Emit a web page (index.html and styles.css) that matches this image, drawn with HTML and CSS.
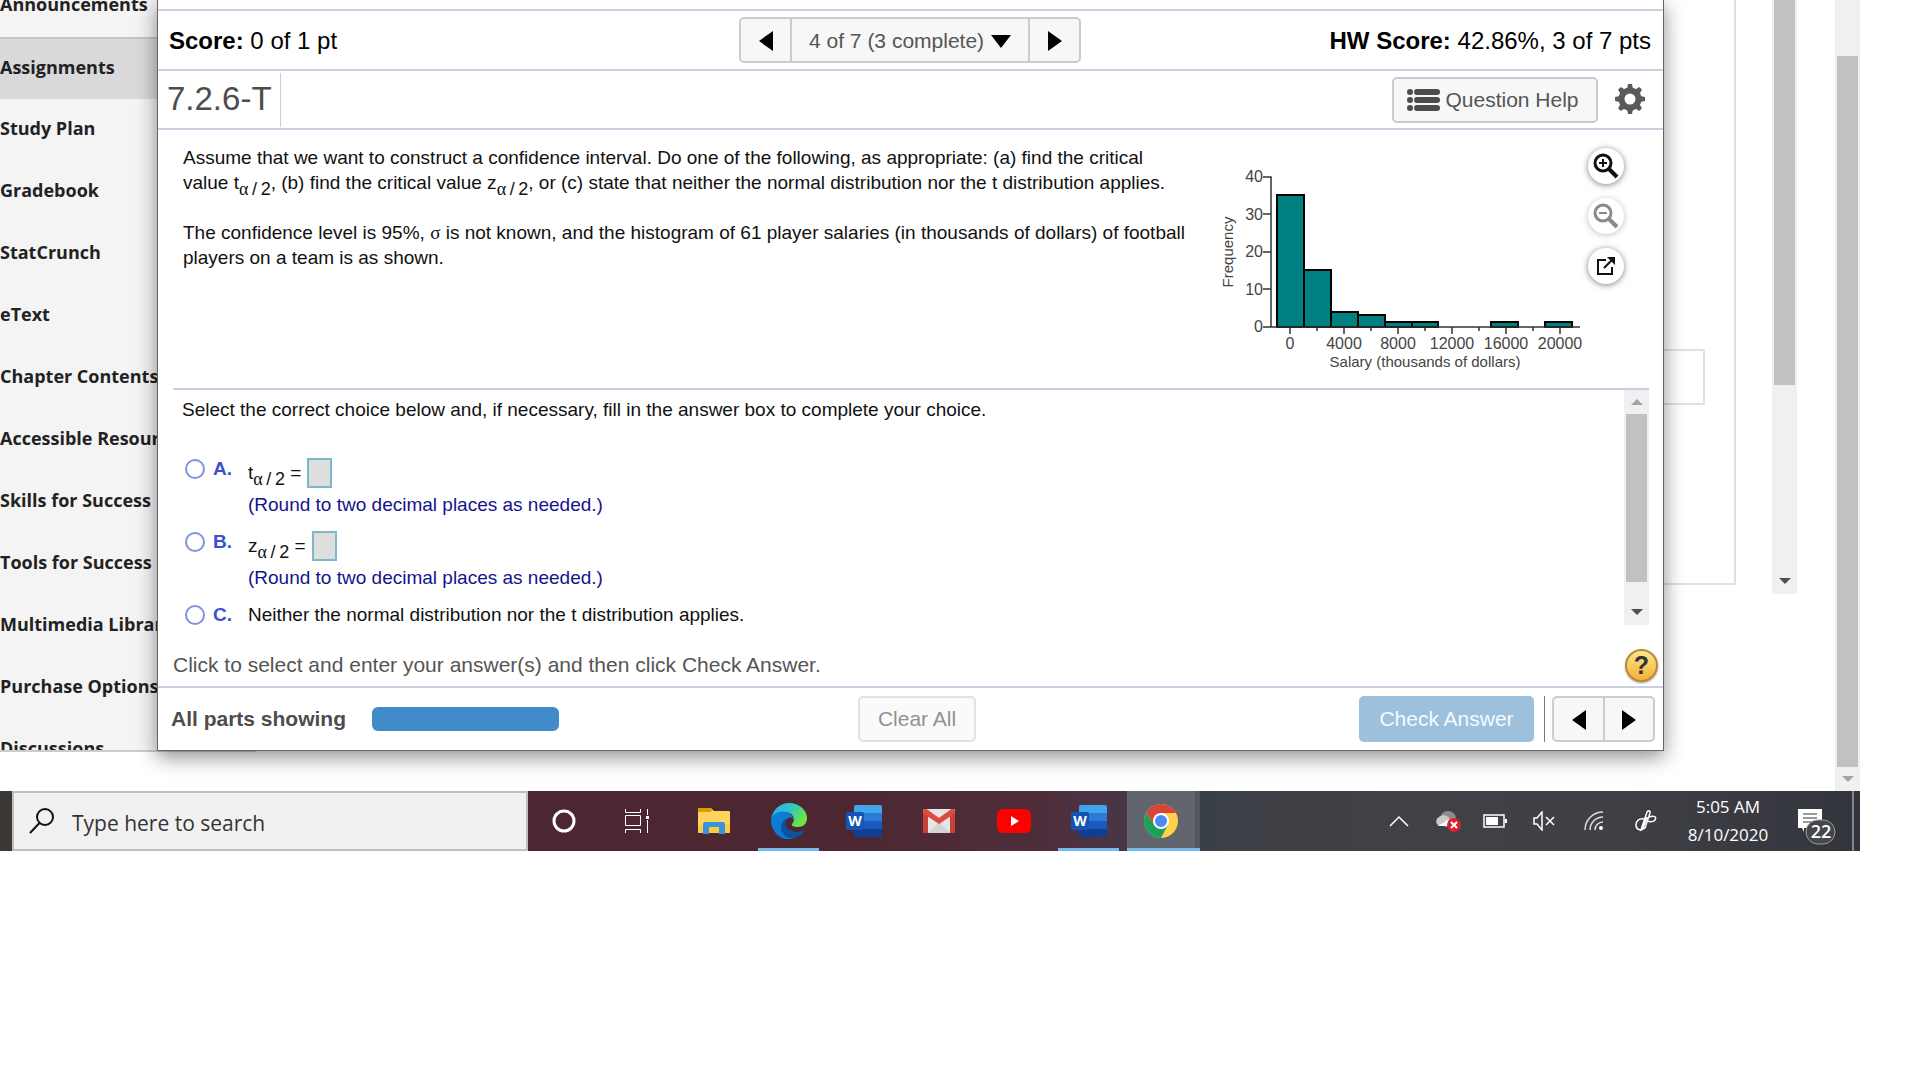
FILE: index.html
```html
<!DOCTYPE html>
<html lang="en">
<head>
    <meta charset="utf-8">
    <title>Homework - 7.2.6-T</title>
    <link rel="stylesheet" href="styles.css">
</head>
<body>
    <div class="screen">
        <div class="browser">
            <nav class="sidebar">
                <ul>
                    <li><a href="#">Announcements</a></li>
                    <li class="active"><a href="#">Assignments</a></li>
                    <li><a href="#">Study Plan</a></li>
                    <li><a href="#">Gradebook</a></li>
                    <li><a href="#">StatCrunch</a></li>
                    <li><a href="#">eText</a></li>
                    <li><a href="#">Chapter Contents</a></li>
                    <li><a href="#">Accessible Resources</a></li>
                    <li><a href="#">Skills for Success</a></li>
                    <li><a href="#">Tools for Success</a></li>
                    <li><a href="#">Multimedia Library</a></li>
                    <li><a href="#">Purchase Options</a></li>
                    <li><a href="#">Discussions</a></li>
                </ul>
            </nav>

            <div class="page-body">
                <div class="page-panel">
                    <div class="page-box"></div>
                </div>
            </div>

            <div class="scrollbar inner-scroll">
                <div class="thumb"></div>
                <span class="arrow down"></span>
            </div>
            <div class="scrollbar outer-scroll">
                <div class="thumb"></div>
                <span class="arrow down light"></span>
            </div>

            <!-- homework player -->
            <section class="dialog">
                <header class="score-row">
                    <p><b>Score:</b> 0 of 1 pt</p>
                    <div class="btn-group">
                        <button type="button" aria-label="Previous question"><span class="tri left"></span></button>
                        <div class="picker">
                            <select aria-label="Question">
                                <option>4 of 7 (3 complete)</option>
                            </select>
                            <span class="tri bottom"></span>
                        </div>
                        <button type="button" aria-label="Next question"><span class="tri right"></span></button>
                    </div>
                    <p class="hw-score"><b>HW Score:</b> 42.86%, 3 of 7 pts</p>
                </header>

                <div class="title-row">
                    <h1>7.2.6-T</h1>
                    <button type="button" class="btn help-btn">
                        <svg width="34" height="22" viewBox="0 0 34 22" fill="#4d4d4d">
                            <circle cx="3" cy="3" r="3"/><circle cx="3" cy="11" r="3"/><circle cx="3" cy="19" r="3"/>
                            <rect x="7" y="0" width="26" height="6" rx="3"/>
                            <rect x="7" y="8" width="26" height="6" rx="3"/>
                            <rect x="7" y="16" width="26" height="6" rx="3"/>
                        </svg>
                        Question Help
                    </button>
                    <button type="button" class="gear" aria-label="Settings">
                        <svg width="30" height="30" viewBox="-15 -15 30 30">
                            <g fill="#5a5a5a">
                                <path id="tooth" d="M-3.2-9 L-2-15 H2 L3.2-9z"/>
                                <use href="#tooth" transform="rotate(45)"/>
                                <use href="#tooth" transform="rotate(90)"/>
                                <use href="#tooth" transform="rotate(135)"/>
                                <use href="#tooth" transform="rotate(180)"/>
                                <use href="#tooth" transform="rotate(225)"/>
                                <use href="#tooth" transform="rotate(270)"/>
                                <use href="#tooth" transform="rotate(315)"/>
                            </g>
                            <circle r="8.5" fill="none" stroke="#5a5a5a" stroke-width="6"/>
                        </svg>
                    </button>
                </div>

                <div class="question">
                    <div class="question-text">
                        <p>Assume that we want to construct a confidence interval. Do one of the following, as appropriate: (a) find the critical<br>
                        value t<sub><i>α</i>&thinsp;/&thinsp;2</sub>, (b) find the critical value z<sub><i>α</i>&thinsp;/&thinsp;2</sub>, or (c) state that neither the normal distribution nor the t distribution applies.</p>
                        <p>The confidence level is 95%, <span class="sigma">σ</span> is not known, and the histogram of 61 player salaries (in thousands of dollars) of football<br>
                        players on a team is as shown.</p>
                    </div>
                    <svg class="histogram" width="370" height="228" viewBox="1214 147 370 228">
                        <g fill="#008080" stroke="#000" stroke-width="2">
                            <rect x="1277" y="195" width="27" height="132"/>
                            <rect x="1304" y="270" width="27" height="57"/>
                            <rect x="1331" y="312" width="27" height="15"/>
                            <rect x="1358" y="315" width="27" height="12"/>
                            <rect x="1385" y="322" width="27" height="5"/>
                            <rect x="1412" y="322" width="26" height="5"/>
                            <rect x="1491" y="322" width="27" height="5"/>
                            <rect x="1545" y="322" width="27" height="5"/>
                        </g>
                        <path d="M1263 177H1271V327M1263 214H1271M1263 252H1271M1263 289H1271M1263 327H1580M1290 327v7M1317 327v4M1344 327v7M1371 327v4M1398 327v7M1425 327v4M1452 327v7M1479 327v4M1506 327v7M1533 327v4M1560 327v7" fill="none" stroke="#333" stroke-width="1.5"/>
                        <g class="tick-y">
                            <text x="1263" y="182">40</text>
                            <text x="1263" y="220">30</text>
                            <text x="1263" y="257">20</text>
                            <text x="1263" y="295">10</text>
                            <text x="1263" y="332">0</text>
                        </g>
                        <g class="tick-x">
                            <text x="1290" y="349">0</text>
                            <text x="1344" y="349">4000</text>
                            <text x="1398" y="349">8000</text>
                            <text x="1452" y="349">12000</text>
                            <text x="1506" y="349">16000</text>
                            <text x="1560" y="349">20000</text>
                        </g>
                        <g class="axis-name">
                            <text x="1425" y="367">Salary (thousands of dollars)</text>
                            <text transform="translate(1233 252) rotate(-90)">Frequency</text>
                        </g>
                    </svg>
                    <div class="tools">
                        <button type="button" aria-label="Zoom in">
                            <svg width="26" height="26" viewBox="0 0 26 26" fill="none" stroke="#111">
                                <circle cx="10" cy="10" r="8" stroke-width="3"/>
                                <path d="M15.500 15.500L24 24" stroke-width="4"/>
                                <path d="M6 10h8M10 6v8" stroke-width="2"/>
                            </svg>
                        </button>
                        <button type="button" aria-label="Zoom out" class="off">
                            <svg width="26" height="26" viewBox="0 0 26 26" fill="none" stroke="#8a8a8a">
                                <circle cx="10" cy="10" r="8" stroke-width="3"/>
                                <path d="M15.500 15.500L24 24" stroke-width="4"/>
                                <path d="M6 10h8" stroke-width="2"/>
                            </svg>
                        </button>
                        <button type="button" aria-label="Open in new window">
                            <svg width="20" height="20" viewBox="0 0 20 20" fill="none" stroke="#111" stroke-width="2">
                                <path d="M10 4H2v14h14V11M8 12L16 4"/>
                                <path d="M11 1h8v8z" fill="#111" stroke="none"/>
                            </svg>
                        </button>
                    </div>
                </div>

                <div class="answers">
                    <form class="choices">
                        <p>Select the correct choice below and, if necessary, fill in the answer box to complete your choice.</p>
                        <div class="choice">
                            <input type="radio" name="choice" id="choiceA">
                            <label for="choiceA">A.</label>
                            <div>
                                <div class="expr"><label for="boxA">t<sub><i>α</i>&thinsp;/&thinsp;2</sub> =</label><input type="text" id="boxA"></div>
                                <div class="note">(Round to two decimal places as needed.)</div>
                            </div>
                        </div>
                        <div class="choice">
                            <input type="radio" name="choice" id="choiceB">
                            <label for="choiceB">B.</label>
                            <div>
                                <div class="expr"><label for="boxB">z<sub><i>α</i>&thinsp;/&thinsp;2</sub> =</label><input type="text" id="boxB"></div>
                                <div class="note">(Round to two decimal places as needed.)</div>
                            </div>
                        </div>
                        <div class="choice">
                            <input type="radio" name="choice" id="choiceC">
                            <label for="choiceC">C.</label>
                            <div>Neither the normal distribution nor the t distribution applies.</div>
                        </div>
                    </form>
                    <div class="scrollbar answer-scroll">
                        <span class="arrow up"></span>
                        <div class="thumb"></div>
                        <span class="arrow down"></span>
                    </div>
                </div>

                <div class="hint">
                    <p>Click to select and enter your answer(s) and then click Check Answer.</p>
                    <button type="button" class="round-help" aria-label="Help">?</button>
                </div>

                <footer class="actions">
                    <div class="parts">
                        <b>All parts showing</b>
                        <div class="progress"></div>
                    </div>
                    <button type="button" class="btn clear-btn" disabled>Clear All</button>
                    <div class="check">
                        <button type="button" class="check-btn">Check Answer</button>
                        <div class="btn-group small">
                            <button type="button" aria-label="Previous"><span class="tri left"></span></button>
                            <button type="button" aria-label="Next"><span class="tri right"></span></button>
                        </div>
                    </div>
                </footer>
            </section>
        </div>

        <div class="taskbar">
            <label class="search">
                <svg width="26" height="26" viewBox="0 0 26 26" fill="none" stroke="#111" stroke-width="2">
                    <circle cx="16" cy="9" r="8"/><path d="M10.500 15L1 25"/>
                </svg>
                <input type="text" placeholder="Type here to search" aria-label="Search">
            </label>

            <div class="apps">
                <div class="app">
                    <svg width="24" height="24" viewBox="0 0 24 24"><circle cx="12" cy="12" r="10" fill="none" stroke="#fff" stroke-width="3"/></svg>
                </div>
                <div class="app">
                    <svg width="32" height="24" viewBox="2 0 32 24" fill="none" stroke="#fff">
                        <path d="M4.500 0v3.500h15V0M4.500 6.500h15v10h-15zM4.500 24v-3.500h15V24M26.500 0v6M26.500 11v13"/>
                        <rect x="25" y="7" width="3" height="3" fill="#fff" stroke="none"/>
                    </svg>
                </div>
                <div class="app">
                    <svg width="32" height="28" viewBox="0 0 32 28">
                        <path d="M0 2a1 1 0 0 1 1-1h12l3 3h15a1 1 0 0 1 1 1v20a1 1 0 0 1-1 1H1a1 1 0 0 1-1-1z" fill="#ffd35c"/>
                        <path d="M0 5V2a1 1 0 0 1 1-1h11.500l2 2-2 2z" fill="#e09a00"/>
                        <path d="M0 18h32v7a1 1 0 0 1-1 1H1a1 1 0 0 1-1-1z" fill="#fdc940"/>
                        <path d="M5 27V17a2 2 0 0 1 2-2h18a2 2 0 0 1 2 2v10h-6v-7H11v7z" fill="#3694dc"/>
                    </svg>
                </div>
                <div class="app running">
                    <svg width="36" height="36" viewBox="0 0 36 36">
                        <defs>
                            <linearGradient id="edgeTop" x1="0" y1="0" x2="1" y2="0.500">
                                <stop offset="0" stop-color="#35a7e8"/><stop offset="0.500" stop-color="#2cc3cf"/><stop offset="1" stop-color="#6ee543"/>
                            </linearGradient>
                        </defs>
                        <path d="M0 17C1 7 9 0 18 0c10 0 18 7 18 15 0 6-4 9-9 9-4 0-7-1-6-3 3-3 2-8-1-10C14 7 3 9 0 17z" fill="url(#edgeTop)"/>
                        <path d="M0 17C2 9 12 6 19 11c2 1 3 3 3 5-2-3-5-2-7 1-3 6 0 14 8 18-2 1-4 1-6 1C8 36 0 28 0 17z" fill="#0a7cd6"/>
                        <path d="M15 15c-6 4-7 13-1 18 7 5 16 1 20-6-9 4-19 1-20-8z" fill="#0d529c"/>
                    </svg>
                </div>
                <div class="app">
                    <svg width="36" height="32" viewBox="0 0 36 32">
                        <rect x="8" width="28" height="32" rx="2" fill="#103f91"/><path d="M8 16h28v8H8z" fill="#185abd"/>
                        <path d="M8 8h28v8H8z" fill="#2b7cd3"/><path d="M8 8V2a2 2 0 0 1 2-2h24a2 2 0 0 1 2 2v6z" fill="#41a5ee"/>
                        <rect y="7" width="18" height="18" rx="2" fill="#1553b5"/><text x="9" y="21" class="word">W</text>
                    </svg>
                </div>
                <div class="app">
                    <svg width="32" height="24" viewBox="0 0 32 24">
                        <rect width="32" height="24" rx="2" fill="#e6e6e6"/>
                        <path d="M5 24L16 13l11 11z" fill="#d3d3d3"/>
                        <path d="M0 24V3l5 3v18zM32 24V3l-5 3v18z" fill="#c94036"/>
                        <path d="M0 3c0-3 3-4 5-2l11 8 11-8c2-2 5-1 5 2 0 1 0 1-1 2L16 15 1 5C0 4 0 4 0 3z" fill="#dd4b3e"/>
                    </svg>
                </div>
                <div class="app">
                    <svg width="34" height="24" viewBox="0 0 34 24"><rect width="34" height="24" rx="6" fill="#f00"/><path d="M14 7v10l8-5z" fill="#fff"/></svg>
                </div>
                <div class="app running">
                    <svg width="36" height="32" viewBox="0 0 36 32">
                        <rect x="8" width="28" height="32" rx="2" fill="#103f91"/><path d="M8 16h28v8H8z" fill="#185abd"/>
                        <path d="M8 8h28v8H8z" fill="#2b7cd3"/><path d="M8 8V2a2 2 0 0 1 2-2h24a2 2 0 0 1 2 2v6z" fill="#41a5ee"/>
                        <rect y="7" width="18" height="18" rx="2" fill="#1553b5"/><text x="9" y="21" class="word">W</text>
                    </svg>
                </div>
                <div class="app running current">
                    <svg width="34" height="34" viewBox="-17 -17 34 34">
                        <circle r="17" fill="#ffd04b"/>
                        <path d="M-14.700-8.500A17 17 0 0 1 14.700-8.500L15-8H0L-6.900 4z" fill="#d6453a"/>
                        <path d="M-14.700-8.500A17 17 0 0 0 0 17L6.900 4 0 8-6.900 4z" fill="#1fa05a"/>
                        <circle r="8" fill="#fff"/><circle r="6" fill="#4a8af4"/>
                    </svg>
                </div>
            </div>

            <div class="tray">
                <svg width="20" height="12" viewBox="0 0 20 12" fill="none" stroke="#fff" stroke-width="1.5"><path d="M1 11l9-9 9 9"/></svg>
                <svg width="26" height="22" viewBox="0 0 26 22">
                    <circle cx="13" cy="9" r="8" fill="#8d8d8f"/><path d="M4 16a5 5 0 0 1 0-9c5-4 11 0 11 4l3 5z" fill="#c9c9c9"/><path d="M3 16l10-6 6 6z" fill="#fff"/>
                    <circle cx="19" cy="15" r="7" fill="#d8232f"/><path d="M16 12l6 6M22 12l-6 6" stroke="#fff" stroke-width="2"/>
                </svg>
                <svg class="battery" width="24" height="14" viewBox="0 0 24 14"><rect x="1" y="1" width="20" height="12" fill="none" stroke="#fff" stroke-width="1.5"/><path d="M3 3h12v8H3zM22 5h2v4h-2z" fill="#fff"/></svg>
                <svg width="22" height="20" viewBox="0 0 22 20" fill="none" stroke="#fff"><path d="M1 7h3l5-6v18l-5-6H1zM13 6l8 8M21 6l-8 8" stroke-width="1.500"/></svg>
                <svg width="26" height="20" viewBox="-3 0 26 20" fill="none" stroke="#ddd" stroke-width="1.500"><path d="M1 19A18 18 0 0 1 19 1M6 19A13 13 0 0 1 19 6M11 19a8 8 0 0 1 8-8"/><circle cx="17" cy="17" r="2" fill="#fff" stroke="none"/></svg>
                <svg width="26" height="22" viewBox="-2 0 26 22" fill="none" stroke="#fff" stroke-width="1.500"><path d="M7 17L12 2c1-2 4-1 3 1L10 18l-4 2zM9 9C4 8 1 11 1 15c0 5 5 6 7 3M14 7c5-2 8 0 6 3-1 2-5 2-8 1M12 7l-4 11"/></svg>
                <div class="clock">5:05 AM<br>8/10/2020</div>
                <svg class="notice" width="40" height="38" viewBox="0 0 40 38">
                    <path d="M1 1h24v19H7v4l-2-4H1z" fill="#fff"/><path d="M6 6h14M6 10h14M6 14h14" stroke="#333" />
                    <rect x="9" y="12" width="29" height="24" rx="12" fill="#46474d" stroke="#999" /><text x="24" y="30">22</text>
                </svg>
                <div class="show-desktop"></div>
            </div>
        </div>
    </div>
</body>
</html>
```
FILE: styles.css
```css
* {
    box-sizing: border-box;
}
body {
    margin: 0;
    background: #fff;
    font-family: "Liberation Sans", Arial, sans-serif;
    font-size: 19px;
    line-height: 25px;
    color: #111;
}
p, h1, ul {
    margin: 0;
    padding: 0;
}
button, input, select {
    font-family: inherit;
    margin: 0;
}
svg {
    display: block;
    flex: none;
}
.screen {
    margin-right: 60px;
}
.browser {
    position: relative;
    display: flex;
    align-items: flex-start;
    height: 791px;
    overflow: hidden;
}

/* course menu */
.sidebar {
    width: 256px;
    height: 752px;
    overflow: hidden;
    background: #f4f4f4;
    border-bottom: 2px solid #ccc;
}
.sidebar ul {
    margin-top: -25px;
    list-style: none;
}
.sidebar li {
    height: 62px;
    line-height: 59px;
}
.sidebar .active {
    background: #dadada;
    border-top: 2px solid #c5c5c5;
    line-height: 56px;
}
.sidebar a {
    font-family: "Open Sans", sans-serif;
    font-size: 18px;
    font-weight: 700;
    color: #222;
    text-decoration: none;
    white-space: nowrap;
}

/* page behind the dialog */
.page-body {
    flex: 1;
    padding-right: 36px;
}
.page-panel {
    height: 585px;
    padding: 349px 29px 0 0;
    border: 2px solid #e0e0e0;
    border-top: none;
}
.page-box {
    height: 56px;
    border: 2px solid #e0e0e0;
}
.scrollbar {
    display: flex;
    flex-direction: column;
    align-items: center;
    width: 25px;
    background: #f0f0f0;
}
.thumb {
    width: 21px;
    background: #c1c1c1;
}
.arrow {
    width: 0;
    height: 0;
    border: 6px solid transparent;
}
.arrow.down {
    margin-top: auto;
    border-top-color: #505050;
    border-bottom: none;
}
.arrow.up {
    border-bottom-color: #a3a3a3;
    border-top: none;
}
.arrow.light {
    border-top-color: #a3a3a3;
}
.inner-scroll {
    height: 594px;
    margin-right: 38px;
    padding-bottom: 10px;
}
.inner-scroll .thumb {
    height: 385px;
}
.outer-scroll {
    height: 791px;
    padding: 56px 0 9px;
}
.outer-scroll .thumb {
    height: 711px;
}

/* dialog */
.dialog {
    position: absolute;
    top: 0;
    left: 157px;
    right: 196px;
    padding-top: 9px;
    background: #fff;
    border: 1px solid #666;
    border-top: none;
    box-shadow: 0 6px 19px rgba(0, 0, 0, 0.45);
}
.score-row {
    display: grid;
    grid-template-columns: 1fr auto 1fr;
    align-items: center;
    height: 62px;
    padding: 0 12px 0 11px;
    border-top: 2px solid #cbcede;
    border-bottom: 2px solid #cbcede;
    font-size: 24px;
    color: #000;
}
.hw-score {
    text-align: right;
}
.btn-group {
    display: flex;
    height: 46px;
    border: 2px solid #ccc;
    border-radius: 5px;
    background: #f7f7f7;
}
.btn-group button {
    display: flex;
    align-items: center;
    justify-content: center;
    width: 49px;
    padding: 2px 0 0;
    border: none;
    background: none;
}
.picker {
    position: relative;
    border-left: 2px solid #ccc;
    border-right: 2px solid #ccc;
}
.picker select {
    appearance: none;
    width: 236px;
    height: 42px;
    padding: 0 0 0 17px;
    border: none;
    background: none;
    font-size: 21px;
    color: #555;
}
.picker .tri {
    position: absolute;
    top: 16px;
    right: 17px;
    pointer-events: none;
}
.tri {
    width: 0;
    height: 0;
}
.tri.left {
    border-top: 10px solid transparent;
    border-bottom: 10px solid transparent;
    border-right: 14px solid #000;
}
.tri.right {
    border-top: 10px solid transparent;
    border-bottom: 10px solid transparent;
    border-left: 14px solid #000;
}
.tri.bottom {
    border-left: 10px solid transparent;
    border-right: 10px solid transparent;
    border-top: 13px solid #000;
}
.title-row {
    display: flex;
    align-items: center;
    height: 59px;
    padding: 2px 18px 1px 9px;
    border-bottom: 2px solid #cbcede;
}
.title-row h1 {
    align-self: stretch;
    padding-right: 8px;
    border-right: 1px solid #cbcede;
    font-size: 33px;
    font-weight: 400;
    line-height: 51px;
    color: #4d4d4d;
}
.btn {
    display: flex;
    align-items: center;
    justify-content: center;
    height: 46px;
    padding: 0;
    border: 2px solid #ccc;
    border-radius: 5px;
    background: #f7f7f7;
    font-size: 21px;
    color: #555;
}
.help-btn {
    gap: 4px;
    width: 206px;
    margin-left: auto;
    padding-right: 4px;
}
.gear {
    margin-left: 17px;
    padding: 0 0 2px;
    border: none;
    background: none;
}
.question {
    display: flex;
    gap: 4px;
    margin: 0 14px 0 15px;
    padding: 15px 25px 13px 10px;
    border-bottom: 2px solid #cbcede;
}
.question-text {
    flex: 1;
    white-space: nowrap;
}
.question-text p {
    margin-bottom: 25px;
}
sub {
    font-size: 18px;
    line-height: 0;
    vertical-align: -6px;
}
sub i {
    font-family: "Liberation Serif", serif;
    font-style: normal;
}
.sigma {
    font-family: "Liberation Serif", serif;
}
.histogram {
    margin-top: 2px;
}
.histogram text {
    font-size: 16px;
    fill: #444;
}
.histogram .tick-y text {
    text-anchor: end;
}
.histogram .tick-x text {
    text-anchor: middle;
}
.histogram .axis-name text {
    font-size: 15px;
    text-anchor: middle;
}
.tools {
    display: flex;
    flex-direction: column;
    gap: 14px;
    margin-top: 3px;
}
.tools button {
    display: flex;
    align-items: center;
    justify-content: center;
    width: 36px;
    height: 36px;
    padding: 0;
    border: none;
    border-radius: 50%;
    background: #fff;
    box-shadow: 0 1px 6px rgba(0, 0, 0, 0.5);
}
.tools .off {
    box-shadow: 0 1px 6px rgba(0, 0, 0, 0.25);
}

/* answer choices */
.answers {
    display: flex;
    height: 235px;
    margin: 0 14px 0 15px;
    overflow: hidden;
}
.choices {
    flex: 1;
    padding: 7px 0 0 9px;
}
.choices p {
    margin-bottom: 34px;
}
.choice {
    display: grid;
    grid-template-columns: 31px 35px 1fr;
    margin-bottom: 12px;
}
.choice > input {
    appearance: none;
    width: 20px;
    height: 20px;
    margin: 3px 0 0 3px;
    border: 2px solid #7f92dc;
    border-radius: 50%;
    background: #fff;
}
.choice > label {
    font-weight: 700;
    color: #3553cc;
}
.expr {
    display: flex;
    align-items: center;
    gap: 6px;
    height: 36px;
    padding-bottom: 3px;
}
.expr input {
    width: 25px;
    height: 30px;
    padding: 0;
    border: 2px solid #7cb8cb;
    background: #dedede;
}
.note {
    color: #14148c;
}
.answer-scroll {
    padding: 9px 0 10px;
}
.answer-scroll .thumb {
    height: 168px;
    margin-top: 9px;
}
.hint {
    display: flex;
    align-items: center;
    justify-content: space-between;
    height: 63px;
    padding: 20px 5px 0 15px;
    border-bottom: 2px solid #cbcede;
    font-size: 21px;
    color: #555;
}
.hint p {
    padding-bottom: 2px;
}
.round-help {
    width: 33px;
    height: 33px;
    padding: 0;
    border: 2px solid #b58a35;
    border-radius: 50%;
    background: linear-gradient(#fde68c, #f2b136);
    box-shadow: 0 1px 2px rgba(0, 0, 0, 0.4);
    font-size: 25px;
    font-weight: 700;
    line-height: 29px;
    color: #333;
}
.actions {
    display: grid;
    grid-template-columns: 1fr auto 1fr;
    align-items: center;
    height: 62px;
    padding: 0 8px 0 13px;
    font-size: 21px;
    color: #4d4d4d;
}
.parts {
    display: flex;
    align-items: center;
}
.parts b {
    padding-bottom: 2px;
}
.progress {
    width: 187px;
    height: 24px;
    margin-left: 26px;
    border-radius: 6px;
    background: #428bca;
}
.clear-btn {
    width: 118px;
    margin-left: 8px;
    border-color: #e2e2e2;
    background: #fafafa;
    color: #919191;
}
.check {
    display: flex;
    justify-content: flex-end;
}
.check-btn {
    width: 175px;
    height: 46px;
    padding: 0;
    border: none;
    border-radius: 5px;
    background: #9dc0dc;
    font-size: 21px;
    color: #f6fafc;
}
.btn-group.small {
    position: relative;
    margin-left: 18px;
}
.btn-group.small::before {
    content: "";
    position: absolute;
    left: -10px;
    top: -2px;
    height: 46px;
    border-left: 1px solid #777;
}
.btn-group.small button + button {
    width: 50px;
    border-left: 2px solid #ccc;
}

/* taskbar */
.taskbar {
    display: flex;
    height: 60px;
    padding-left: 12px;
    background: linear-gradient(90deg, #3b3734 0, #3b3734 12px, #4c2630 12px, #4c2630 800px, #4e2d3a 1040px, #4b3444 1100px, #3a4048 1200px, #414145 1300px, #404147 1600px, #33353c 100%);
    font-family: "Open Sans", sans-serif;
    color: #fff;
}
.search {
    display: flex;
    align-items: center;
    gap: 17px;
    width: 516px;
    padding-left: 15px;
    border: 2px solid #bfbfbf;
    background: #f1f1f1;
}
.search input {
    flex: 1;
    padding: 3px 0 0;
    border: none;
    background: none;
    font-size: 21px;
}
.search input::placeholder {
    color: #333;
}
.apps {
    display: flex;
    gap: 2px;
    margin-left: -1px;
}
.app {
    position: relative;
    display: flex;
    align-items: center;
    justify-content: center;
    width: 73px;
}
.app.running::after {
    content: "";
    position: absolute;
    left: 6px;
    right: 6px;
    bottom: 0;
    height: 3px;
    background: #76b9ed;
}
.app.current {
    background: #62646e;
    border-right: 5px solid #555861;
}
.app.current::after {
    left: 0;
    right: -5px;
}
.word {
    font-size: 14px;
    font-weight: 700;
    text-anchor: middle;
    fill: #fff;
}
.tray {
    display: flex;
    align-items: center;
    gap: 26px;
    margin-left: auto;
}
.battery {
    margin-left: -4px;
}
.clock {
    width: 86px;
    font-size: 17px;
    line-height: 28px;
    text-align: center;
}
.notice {
    margin-top: 12px;
}
.notice text {
    font-size: 18px;
    font-weight: 600;
    text-anchor: middle;
    fill: #fff;
}
.show-desktop {
    align-self: stretch;
    width: 8px;
    margin-left: -11px;
    border-left: 2px solid #85868b;
}
```
